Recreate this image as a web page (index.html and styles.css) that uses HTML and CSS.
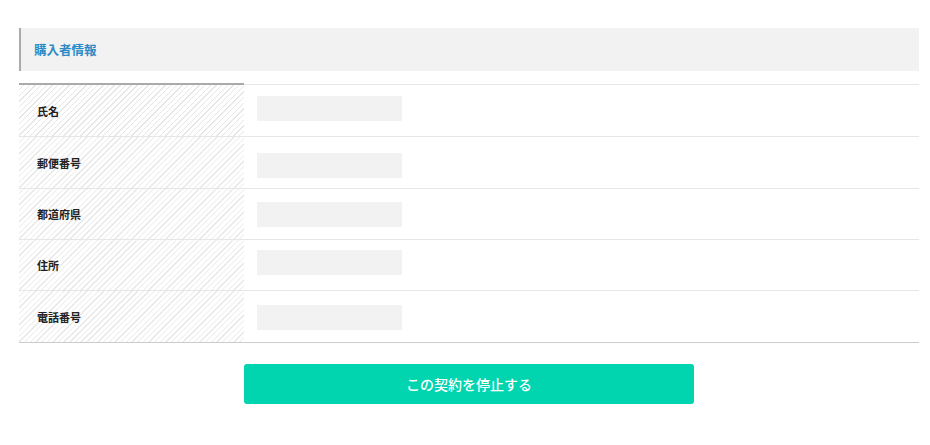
FILE: index.html
```html
<!DOCTYPE html>
<html lang="ja">
  <head>
    <meta charset="UTF-8" />
    <meta name="viewport" content="width=device-width, initial-scale=1.0" />
    <title>購入者情報</title>
    <link rel="stylesheet" href="styles.css">
  </head>
  <body>
    <div class="container">
      <h2 class="section-title">購入者情報</h2>
      <table class="info-table">
        <tr>
          <th>氏名</th>
          <td><span class="placeholder"></span></td>
        </tr>
        <tr>
          <th>郵便番号</th>
          <td><span class="placeholder"></span></td>
        </tr>
        <tr>
          <th>都道府県</th>
          <td><span class="placeholder"></span></td>
        </tr>
        <tr>
          <th>住所</th>
          <td><span class="placeholder"></span></td>
        </tr>
        <tr>
          <th>電話番号</th>
          <td><span class="placeholder"></span></td>
        </tr>
      </table>
      <div class="actions">
        <button type="button" class="btn">この契約を停止する</button>
      </div>
    </div>
  </body>
</html>
```

FILE: styles.css
```css
body {
  font-family: "Noto Sans CJK JP", "Noto Sans", sans-serif;
  margin: 0;
  padding: 0;
  background-color: #fff;
  color: #222;
}

.container {
  width: 900px;
  margin: 0 auto;
  padding: 28px 11px 0 19px;
}

.section-title {
  margin: 0;
  height: 43px;
  display: flex;
  align-items: center;
  padding-left: 13px;
  background-color: #f2f2f2;
  border-left: 2px solid #aaa;
  font-size: 12.5px;
  font-weight: bold;
  color: #2b8bc6;
}

.info-table {
  width: 100%;
  margin-top: 12px;
  border-collapse: collapse;
  border-top: 1px solid #e6e6e6;
  border-bottom: 1px solid #ccc;
}

.info-table th {
  width: 207px;
  height: 51px;
  padding: 0 0 0 18px;
  text-align: left;
  font-size: 11px;
  font-weight: bold;
  color: #222;
  background: repeating-linear-gradient(
    -45deg,
    #fff 0,
    #fff 3px,
    #e6e6e6 3px,
    #e6e6e6 4px
  );
  border-bottom: 1px solid #e6e6e6;
}

.info-table tr:nth-child(3) th,
.info-table tr:nth-child(4) th {
  height: 50px;
}

.info-table tr:first-child th {
  border-top: 2px solid #aaa;
}

.info-table tr:last-child th,
.info-table tr:last-child td {
  border-bottom: none;
}

.info-table td {
  padding: 0 0 0 13px;
  border-bottom: 1px solid #e6e6e6;
  vertical-align: top;
}

.placeholder {
  display: block;
  width: 145px;
  height: 25px;
  background-color: #f2f2f2;
}

.info-table tr:nth-child(1) .placeholder { margin-top: 11px; }
.info-table tr:nth-child(2) .placeholder { margin-top: 16px; }
.info-table tr:nth-child(3) .placeholder { margin-top: 13px; }
.info-table tr:nth-child(4) .placeholder { margin-top: 10px; }
.info-table tr:nth-child(5) .placeholder { margin-top: 14px; }

.actions {
  display: flex;
  justify-content: center;
  padding-top: 21px;
}

.btn {
  width: 450px;
  height: 40px;
  font-family: inherit;
  font-size: 14px;
  font-weight: 500;
  color: #fff;
  background-color: #00d5b0;
  border: none;
  border-radius: 3px;
  cursor: pointer;
}
```
